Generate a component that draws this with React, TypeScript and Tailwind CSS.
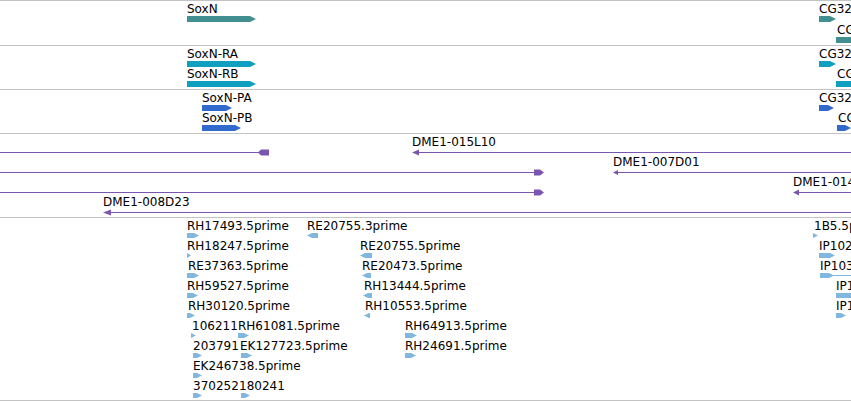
import React from "react"

type Feat = {
  label: string
  lx: number
  x: number
  w: number
  top: number
  dir?: "r" | "l"
  tail?: number
}

const labelCls = "absolute whitespace-nowrap text-[12px] leading-[14px] text-black font-['DejaVu_Sans',sans-serif]"

// gene / transcript / protein tracks
const genes: Feat[] = [
  { label: "SoxN", lx: 187, x: 187, w: 69, top: 15 },
  { label: "CG32", lx: 819, x: 819, w: 17, top: 15 },
  { label: "CG3263", lx: 837, x: 836, w: 22, top: 36 },
]

const transcripts: Feat[] = [
  { label: "SoxN-RA", lx: 187, x: 187, w: 69, top: 15 },
  { label: "SoxN-RB", lx: 187, x: 187, w: 69, top: 35 },
  { label: "CG32", lx: 819, x: 819, w: 17, top: 15 },
  { label: "CG3263-RA", lx: 837, x: 836, w: 22, top: 35 },
]

const proteins: Feat[] = [
  { label: "SoxN-PA", lx: 202, x: 202, w: 30, top: 15 },
  { label: "SoxN-PB", lx: 202, x: 202, w: 39, top: 35 },
  { label: "CG32", lx: 819, x: 819, w: 15, top: 15 },
  { label: "CG3263-PA", lx: 838, x: 837, w: 14, top: 35 },
]

// ESTs, row pitch 20
const r = (n: number) => 15 + n * 20
const ests: Feat[] = [
  { label: "RH17493.5prime", lx: 187, x: 187, w: 12, top: r(0) },
  { label: "RE20755.3prime", lx: 307, x: 307, w: 11, top: r(0), dir: "l" },
  { label: "1B5.5prime", lx: 814, x: 813, w: 5, top: r(0) },
  { label: "RH18247.5prime", lx: 187, x: 187, w: 4, top: r(1) },
  { label: "RE20755.5prime", lx: 360, x: 360, w: 12, top: r(1), dir: "l" },
  { label: "IP10215.5prime", lx: 819, x: 819, w: 16, top: r(1) },
  { label: "RE37363.5prime", lx: 188, x: 187, w: 12, top: r(2) },
  { label: "RE20473.5prime", lx: 362, x: 362, w: 9, top: r(2), dir: "l" },
  { label: "IP10342.5prime", lx: 820, x: 820, w: 14, top: r(2), tail: 40 },
  { label: "RH59527.5prime", lx: 187, x: 187, w: 11, top: r(3) },
  { label: "RH13444.5prime", lx: 364, x: 363, w: 9, top: r(3), dir: "l" },
  { label: "IP11207.5prime", lx: 836, x: 836, w: 20, top: r(3) },
  { label: "RH30120.5prime", lx: 188, x: 187, w: 8, top: r(4) },
  { label: "RH10553.5prime", lx: 365, x: 364, w: 6, top: r(4), dir: "l" },
  { label: "IP11394.5prime", lx: 836, x: 836, w: 10, top: r(4) },
  { label: "106211", lx: 192, x: 191, w: 5, top: r(5) },
  { label: "RH61081.5prime", lx: 238, x: 238, w: 11, top: r(5) },
  { label: "RH64913.5prime", lx: 405, x: 405, w: 12, top: r(5) },
  { label: "203791", lx: 193, x: 193, w: 9, top: r(6) },
  { label: "EK127723.5prime", lx: 240, x: 241, w: 11, top: r(6) },
  { label: "RH24691.5prime", lx: 405, x: 405, w: 11, top: r(6) },
  { label: "EK246738.5prime", lx: 193, x: 193, w: 9, top: r(7) },
  { label: "370252", lx: 193, x: 193, w: 9, top: r(8) },
  { label: "180241", lx: 239, x: 241, w: 9, top: r(8) },
]

function Arrow({ w, h, dir = "r", color, tip }: { w: number; h: number; dir?: "r" | "l"; color: string; tip: number }) {
  const t = Math.min(tip, w)
  const pts =
    dir === "r"
      ? `0,0 ${w - t},0 ${w},${h / 2} ${w - t},${h} 0,${h}`
      : `${w},0 ${t},0 0,${h / 2} ${t},${h} ${w},${h}`
  return (
    <svg width={w} height={h} className="block">
      <polygon points={pts} fill={color} />
    </svg>
  )
}

function FeatureTrack({ feats, color, barH, tip, heightCls }: { feats: Feat[]; color: string; barH: number; tip: number; heightCls: string }) {
  return (
    <div className={`relative shrink-0 border-b border-[#c3c3c3] ${heightCls}`}>
      {feats.map((f) => (
        <React.Fragment key={f.label + f.lx + f.top}>
          <span className={labelCls} style={{ left: f.lx, top: f.top - 14 }}>
            {f.label}
          </span>
          {f.tail ? (
            <div className="absolute h-px" style={{ left: f.x, top: f.top + Math.floor(barH / 2), width: f.w + f.tail, background: color }} />
          ) : null}
          <div className="absolute" style={{ left: f.x, top: f.top }}>
            <Arrow w={f.w} h={barH} dir={f.dir} color={color} tip={tip} />
          </div>
        </React.Fragment>
      ))}
    </div>
  )
}

const purple = "#7a56b0"

function CloneTrack() {
  const labels = [
    { t: "DME1-015L10", x: 412, y: 1 },
    { t: "DME1-007D01", x: 613, y: 21 },
    { t: "DME1-014C22", x: 793, y: 41 },
    { t: "DME1-008D23", x: 103, y: 61 },
  ]
  return (
    <div className="relative h-[84px] shrink-0 border-b border-[#c3c3c3]">
      <svg width={851} height={83} className="absolute left-0 top-0">
        <g stroke={purple} strokeWidth={1.2}>
          <line x1={0} y1={18.5} x2={262} y2={18.5} />
          <line x1={414} y1={18.5} x2={851} y2={18.5} />
          <line x1={0} y1={38.5} x2={537} y2={38.5} />
          <line x1={615} y1={38.5} x2={851} y2={38.5} />
          <line x1={0} y1={58.5} x2={537} y2={58.5} />
          <line x1={795} y1={58.5} x2={851} y2={58.5} />
          <line x1={105} y1={78.5} x2={851} y2={78.5} />
        </g>
        <g fill={purple}>
          <polygon points="258,18.5 261,15.5 269,15.5 269,21.5 261,21.5" />
          <polygon points="412,18.5 419,15.5 419,21.5" />
          <polygon points="534,35.5 540,35.5 544,38.5 540,41.5 534,41.5" />
          <polygon points="613,38.5 618,36 618,41" />
          <polygon points="534,55.5 540,55.5 544,58.5 540,61.5 534,61.5" />
          <polygon points="793,58.5 799,55.5 799,61.5" />
          <polygon points="103,78.5 111,75.5 111,81.5" />
        </g>
      </svg>
      {labels.map((l) => (
        <span key={l.t} className={labelCls} style={{ left: l.x, top: l.y }}>
          {l.t}
        </span>
      ))}
    </div>
  )
}

export default function App() {
  return (
    <div className="flex h-[401px] w-[851px] flex-col overflow-hidden border-t border-[#c3c3c3] bg-white">
      <FeatureTrack feats={genes} color="#418f91" barH={6} tip={6} heightCls="h-[45px]" />
      <FeatureTrack feats={transcripts} color="#0fa0c0" barH={6} tip={6} heightCls="h-[44px]" />
      <FeatureTrack feats={proteins} color="#3169cc" barH={6} tip={6} heightCls="h-[44px]" />
      <CloneTrack />
      <FeatureTrack feats={ests} color="#80b7de" barH={5} tip={5} heightCls="h-[183px]" />
    </div>
  )
}
